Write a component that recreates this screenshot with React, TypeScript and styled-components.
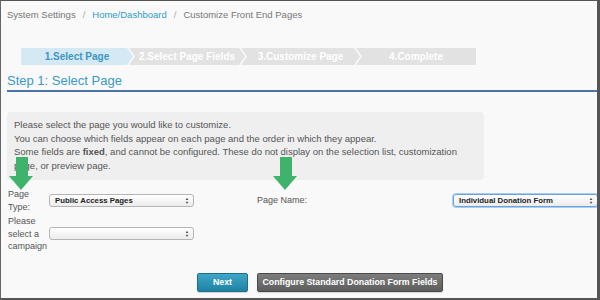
import React from "react";
import styled, { createGlobalStyle } from "styled-components";

const Global = createGlobalStyle`
  html, body { margin: 0; padding: 0; background: #f8f8f8; }
  body { font-family: "Liberation Sans", Arial, sans-serif; }
  * { box-sizing: border-box; }
`;

const Frame = styled.div`
  position: relative;
  width: 600px;
  height: 300px;
  background: #f9f9f9;
  border-top: 1px solid #555;
  border-left: 1px solid #666;
  border-right: 3px solid #555;
  border-bottom: 2px solid #555;
  padding: 0 0 0 6px;
  overflow: hidden;
`;

const Breadcrumb = styled.div`
  margin-top: 7px;
  display: flex;
  gap: 7px;
  font-size: 9.5px;
  line-height: 14px;
  color: #777;
  white-space: nowrap;
`;

const Crumb = styled.span<{ $link?: boolean }>`
  color: ${(p) => (p.$link ? "#2f9bc6" : "#777")};
`;

const Sep = styled.span`
  color: #aaa;
`;

const Steps = styled.div`
  margin-top: 26px;
  margin-left: 14px;
  display: flex;
  height: 17px;
`;

const Step = styled.div<{ $w: number; $active?: boolean; $first?: boolean; $last?: boolean }>`
  width: ${(p) => p.$w}px;
  flex: none;
  margin-left: ${(p) => (p.$first ? 0 : -4)}px;
  height: 17px;
  display: flex;
  align-items: center;
  justify-content: center;
  font-size: 10px;
  font-weight: bold;
  color: ${(p) => (p.$active ? "#3a98c3" : "#ffffff")};
  background: ${(p) => (p.$active ? "#d4e9f3" : "#e2e2e2")};
  clip-path: ${(p) => {
    const left = p.$first ? "0 0" : "0 0";
    const notch = p.$first ? "" : ", 6px 50%";
    const right = p.$last
      ? "100% 0, 100% 100%"
      : "calc(100% - 6px) 0, 100% 50%, calc(100% - 6px) 100%";
    return `polygon(${left}, ${right}, 0 100%${notch})`;
  }};
  white-space: nowrap;
`;

const Heading = styled.h1`
  margin: 8px 0 0 0;
  font-size: 13px;
  line-height: 16px;
  font-weight: normal;
  color: #3a9ac6;
  padding-bottom: 1px;
  border-bottom: 2px solid #4b74a8;
`;

const InfoBox = styled.div`
  margin-top: 20px;
  width: 477px;
  background: #efefef;
  border-radius: 4px;
  padding: 6px 7px 8px 7px;
  font-size: 9.5px;
  line-height: 13.5px;
  color: #555;
  white-space: nowrap;
`;

const FormGrid = styled.div`
  margin-top: 8px;
  margin-left: 1px;
  display: grid;
  grid-template-columns: 41px 145px 63px 196px 145px;
  row-gap: 2px;
  align-items: center;
`;

const Label = styled.div<{ $col: number }>`
  grid-column: ${(p) => p.$col};
  font-size: 9px;
  line-height: 12.5px;
  color: #555;
`;

const SelectBox = styled.div<{ $col: number; $focus?: boolean }>`
  grid-column: ${(p) => p.$col};
  height: 13px;
  border: 1px solid ${(p) => (p.$focus ? "#6aa3dc" : "#b4b4b4")};
  box-shadow: ${(p) => (p.$focus ? "0 0 0 1px #a9cdf0" : "none")};
  border-radius: 3px;
  background: linear-gradient(#ffffff, #ececec);
  display: flex;
  align-items: center;
  justify-content: space-between;
  padding: 0 4px 0 5px;
  font-size: 7.8px;
  font-weight: bold;
  color: #222;
  white-space: nowrap;
`;

const Caret = styled.span`
  display: flex;
  flex-direction: column;
  font-size: 4px;
  line-height: 3.5px;
  color: #444;
`;

const Buttons = styled.div`
  margin-top: 20px;
  padding-left: 190px;
  display: flex;
  gap: 9px;
`;

const Button = styled.button<{ $primary?: boolean; $w: number }>`
  width: ${(p) => p.$w}px;
  height: 19px;
  padding: 0;
  border-radius: 2px;
  border: 1px solid ${(p) => (p.$primary ? "#1d6f8c" : "#4a4a4a")};
  background: ${(p) =>
    p.$primary
      ? "linear-gradient(#3ea6c6, #1f82a4)"
      : "linear-gradient(#7d7d7d, #5d5d5d)"};
  color: #fff;
  font-family: "Liberation Sans", Arial, sans-serif;
  font-size: 8.8px;
  font-weight: bold;
  white-space: nowrap;
  box-shadow: 0 1px 1px rgba(0, 0, 0, 0.15);
`;

const Arrow = styled.svg<{ $x: number; $y: number }>`
  position: absolute;
  left: ${(p) => p.$x}px;
  top: ${(p) => p.$y}px;
`;

const GreenArrow = ({ x, y }: { x: number; y: number }) => (
  <Arrow $x={x} $y={y} width="24" height="33" viewBox="0 0 24 33">
    <polygon points="7,0 19,0 19,19 24,19 12,33 0,19 7,19" fill="#3fb36b" />
  </Arrow>
);

const Select = ({ col, text, focus }: { col: number; text: string; focus?: boolean }) => (
  <SelectBox $col={col} $focus={focus}>
    <span>{text}</span>
    <Caret>
      <span>▲</span>
      <span>▼</span>
    </Caret>
  </SelectBox>
);

export default function App() {
  return (
    <>
      <Global />
      <Frame>
        <Breadcrumb>
          <Crumb>System Settings</Crumb>
          <Sep>/</Sep>
          <Crumb $link>Home/Dashboard</Crumb>
          <Sep>/</Sep>
          <Crumb>Customize Front End Pages</Crumb>
        </Breadcrumb>

        <Steps>
          <Step $w={112} $first $active>1.Select Page</Step>
          <Step $w={116}>2.Select Page Fields</Step>
          <Step $w={119}>3.Customize Page</Step>
          <Step $w={120} $last>4.Complete</Step>
        </Steps>

        <Heading>Step 1: Select Page</Heading>

        <InfoBox>
          Please select the page you would like to customize.
          <br />
          You can choose which fields appear on each page and the order in which they appear.
          <br />
          Some fields are <b>fixed</b>, and cannot be configured. These do not display on the selection list, customization
          <br />
          page, or preview page.
        </InfoBox>

        <FormGrid>
          <Label $col={1}>
            Page
            <br />
            Type:
          </Label>
          <Select col={2} text="Public Access Pages" />
          <Label $col={4}>Page Name:</Label>
          <Select col={5} text="Individual Donation Form" focus />
          <Label $col={1}>
            Please
            <br />
            select a
            <br />
            campaign
          </Label>
          <Select col={2} text="" />
        </FormGrid>

        <Buttons>
          <Button $primary $w={51}>Next</Button>
          <Button $w={186}>Configure Standard Donation Form Fields</Button>
        </Buttons>

        <GreenArrow x={8} y={156} />
        <GreenArrow x={272} y={156} />
      </Frame>
    </>
  );
}
